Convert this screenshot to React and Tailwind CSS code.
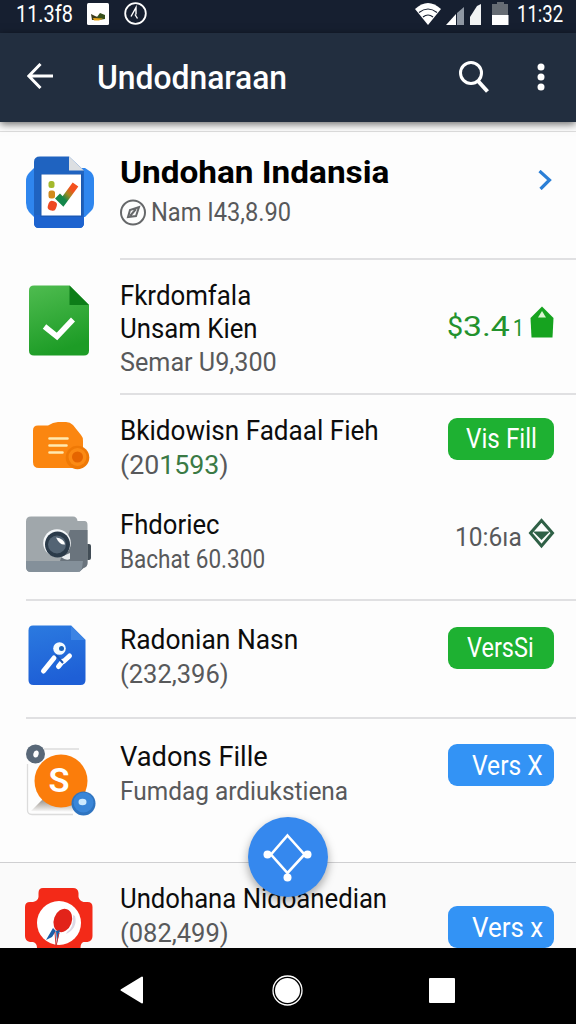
import { useLayoutEffect, useRef, useState } from 'react';
import clsx from 'clsx';

// Condenses or widens one line of text so that it fills the given width.
function FitText({ width, className, children }) {
  const ref = useRef(null);
  const [scale, setScale] = useState(1);

  useLayoutEffect(() => {
    setScale(width / ref.current.offsetWidth);
  }, [width]);

  return (
    <div style={{ width }} className={className}>
      <span ref={ref} className="inline-block whitespace-pre origin-left" style={{ transform: `scaleX(${scale})` }}>
        {children}
      </span>
    </div>
  );
}

function TasksIcon() {
  return (
    <svg width="68" height="73" viewBox="0 0 68 73">
      <defs>
        <linearGradient id="tick" x1="0" y1="1" x2="1" y2="0">
          <stop offset="0.25" stopColor="#13874b" />
          <stop offset="0.5" stopColor="#a08a20" />
          <stop offset="0.75" stopColor="#f4511e" />
        </linearGradient>
      </defs>
      <path d="M8 12h51l6 4q3 3 3 8v23q0 5-3 8l-6 6H8l-5-5q-3-4-3-9V25q0-5 3-8z" fill="#2f86ee" />
      <path d="M14 .5h29l15 14V67q0 5-5 5H13q-5 0-5-5V6q0-5.500 6-5.500z" fill="#1f63c0" />
      <path d="M8 59h50v8q0 5-5 5H13q-5 0-5-5z" fill="#1d63cf" />
      <path d="M43 .5l15 14H43z" fill="#dcdfe2" />
      <rect x="14.500" y="18" width="42" height="43" fill="#1a4f9d" opacity=".5" />
      <rect x="15.500" y="18.500" width="39.500" height="41" fill="#fff" />
      <rect x="22.500" y="25" width="6" height="7" rx="2.500" fill="#a4b92c" />
      <rect x="22.500" y="34.500" width="6.500" height="8" rx="2.500" fill="#d08a1c" />
      <rect x="22" y="45" width="8.500" height="9.500" rx="3.500" fill="#ee4a22" transform="rotate(18 26 50)" />
      <path d="M31.500 40l5.500 5.500L49.500 28.500" fill="none" stroke="url(#tick)" strokeWidth="7" />
    </svg>
  );
}

function SheetIcon() {
  return (
    <svg width="60" height="71" viewBox="0 0 60 71">
      <defs>
        <linearGradient id="sheet" x1="0" y1="0" x2="0.3" y2="1">
          <stop offset="0" stopColor="#4fbc50" />
          <stop offset="1" stopColor="#1d9c26" />
        </linearGradient>
      </defs>
      <path d="M5 .5h35.500L60 20v45.500q0 5-5 5H5q-5 0-5-5V5.500q0-5 5-5z" fill="url(#sheet)" />
      <path d="M40.500.5L60 20H40.500z" fill="#0d7d18" />
      <path d="M15.500 41.500L28 51.500 44 34.500" fill="none" stroke="#fff" strokeWidth="5.500" />
    </svg>
  );
}

function NoteIcon() {
  return (
    <svg width="57" height="50" viewBox="0 0 57 50">
      <path d="M5 4.500h10Q20 1 25 1h8q4 0 7 3l8 10q2 2 2 6v27H6q-6 0-6-6V9.500q0-5 5-5z" fill="#fb8610" />
      <path d="M16.500 17.500h18M16.500 24.500h17M16.500 31.500h13" stroke="#ffe9b0" strokeWidth="2.600" strokeLinecap="round" />
      <circle cx="44.500" cy="36.500" r="11.800" fill="#ef7906" />
      <circle cx="44.500" cy="36" r="9" fill="#fb8a14" />
      <circle cx="44.500" cy="36" r="5.500" fill="#e56500" />
    </svg>
  );
}

function CameraIcon() {
  return (
    <svg width="66" height="57" viewBox="0 0 66 57">
      <path d="M56 28h7q2 0 2 2v12q0 2-2 2h-7z" fill="#424d56" />
      <path d="M5 .5h42q4 0 4.500 4.500h7q3 0 3 4V47q0 4-4 5l-4 4H5q-5 0-5-5V5.500q0-5 5-5z" fill="#a0a7ab" />
      <path d="M44 14h17.500v33q0 4-4 5l-4 3.500V45H34z" fill="#6a747d" />
      <path d="M0 45h57l-1 7q-1 4-5 4H5q-5 0-5-5z" fill="#84909a" />
      <path d="M35 41l9-4v6q-4 2-9-2z" fill="#e9edf0" />
      <circle cx="31" cy="27" r="13.800" fill="#f5f8fa" />
      <ellipse cx="31.500" cy="28.500" rx="12.500" ry="13" fill="#2b3b4a" />
      <circle cx="31" cy="28.500" r="9" fill="#536474" />
      <path d="M30 21.500q8 1 9 7-5 1-9-7z" fill="#fff" />
    </svg>
  );
}

function RunnerIcon() {
  return (
    <svg width="58" height="60" viewBox="0 0 58 60">
      <defs>
        <linearGradient id="runner" x1="0" y1="0" x2="0.2" y2="1">
          <stop offset="0" stopColor="#2b7ae0" />
          <stop offset="1" stopColor="#1e5fd6" />
        </linearGradient>
      </defs>
      <path d="M5 .5h38L57.500 15v40q0 5-5 5H5.500q-5 0-5-5V5.500q0-5 4.500-5z" fill="url(#runner)" />
      <path d="M43 .5L57.500 15H43z" fill="#3c84e4" />
      <path d="M15.500 46L26 33M30.500 41.500l4-5M35.500 36.500l6-5.500" stroke="#fff" strokeWidth="5" strokeLinecap="round" />
      <path d="M28 30l7 8" stroke="#1b56b4" strokeWidth="2" />
      <circle cx="31.500" cy="23.500" r="6.300" fill="#f4fbff" />
      <circle cx="33.500" cy="23.500" r="2.500" fill="#1b62b8" />
    </svg>
  );
}

function CoinIcon() {
  return (
    <svg width="70" height="74" viewBox="0 0 70 74">
      <path d="M18 5h35M1.500 20v46q0 4.500 4.500 4.500h41" fill="none" stroke="#dcdcdc" strokeWidth="1.300" />
      <linearGradient id="coinShade" x1="0" y1="0" x2="0" y2="1">
        <stop offset="0.2" stopColor="#a8a29c" />
        <stop offset="1" stopColor="#fdfdfd" />
      </linearGradient>
      <path d="M5 67l12-12 35 4-6 9z" fill="url(#coinShade)" />
      <circle cx="35" cy="37" r="26.500" fill="#fb7d0b" />
      <text x="22.500" y="48" className="font-['Roboto'] font-semibold" fontSize="33" fill="#fff" textLength="21" lengthAdjust="spacingAndGlyphs">S</text>
      <circle cx="9.500" cy="10" r="9.500" fill="#596878" />
      <ellipse cx="10" cy="10" rx="2.600" ry="3.600" fill="#fff" transform="rotate(15 10 10)" />
      <circle cx="57.500" cy="59.500" r="12" fill="#2f74c0" />
      <circle cx="57.500" cy="58.500" r="10" fill="#3a86d8" />
      <ellipse cx="56.500" cy="58" rx="4" ry="3.300" fill="#cdeaff" />
    </svg>
  );
}

function RocketIcon() {
  return (
    <svg width="68" height="60" viewBox="0 0 68 60">
      <path d="M18 0h30q5 0 5.500 5v4q1 4 5 5h4q5 0 5 5v29q0 5-5 6h-4q-3 1-3 6H12q0-5-4-6H5q-5-1-5-6V19q0-5 5-5h3q5-1 5.500-5V5q0-5 4.500-5z" fill="#f32a18" />
      <circle cx="34" cy="35" r="22" fill="#fff" />
      <path d="M42 44q7-4 6-17l2 1q3 12-9 18z" fill="#dcd9e6" />
      <ellipse cx="38" cy="32.500" rx="9" ry="12" transform="rotate(20 38 32)" fill="#e2231a" />
      <path d="M28 40l-7 12 6-3 4-6zM31 43l1 12 3-13z" fill="#1d5fa8" />
      <path d="M30 44l1 14 3-13" fill="none" stroke="#c33" strokeWidth="1" />
    </svg>
  );
}

function StatusBar() {
  return (
    <div className="h-[33px] bg-[#161f30] flex items-center pl-4 pr-[13px] text-white">
      <FitText width={57} className="-mt-1 text-[23px] leading-7">11.3f8</FitText>
      <svg className="ml-[14px] -mt-[6px]" width="22" height="22" viewBox="0 0 22 22">
        <rect width="22" height="22" rx="1.500" fill="#fff" />
        <path d="M4 11l4 2 5 2v2H5z" fill="#3b3b1c" />
        <path d="M10 14l3-4 5 2v4l-6 1z" fill="#37501d" />
        <path d="M6 15l10 .5-4 2H7z" fill="#e3a51c" />
      </svg>
      <svg className="ml-[15px] -mt-[6px]" width="23" height="23" viewBox="0 0 23 23" fill="none" stroke="#fff">
        <circle cx="11.500" cy="11.500" r="10.300" strokeWidth="1.800" />
        <path d="M7 14.500l5-9v7M11 12.500l2.500 4" strokeWidth="1.400" />
      </svg>
      <svg className="ml-auto -mt-[6px]" width="26" height="22" viewBox="0 0 26 22">
        <path d="M0 6Q13-6 26 6L13 22z" fill="#fff" />
        <path d="M4 9.500q9-7 18 0M8 14q5-4 10 0" fill="none" stroke="#161f30" strokeWidth="1.200" />
      </svg>
      <svg className="ml-[5px] -mt-[6px]" width="36" height="22" viewBox="0 0 36 22">
        <path d="M0 22L10 11v11z" fill="#fff" />
        <path d="M11 10l7-6v18h-7z" fill="#8e97a3" />
        <path d="M24 22V14L31 3l4-2v21z" fill="#f1f3f4" />
      </svg>
      <svg className="ml-[10px] -mt-[6px]" width="17" height="23" viewBox="0 0 17 23">
        <path d="M5 0h7v2h4v11H0V2h5z" fill="#666c74" />
        <path d="M0 13h16.500v10H0z" fill="#fff" />
      </svg>
      <FitText width={46} className="-mt-[3px] ml-2 text-[23px] leading-7">11:32</FitText>
    </div>
  );
}

function AppBar() {
  return (
    <div className="relative z-10 h-[89px] bg-[#222e3f] flex items-center pl-[27px] pr-[31px] text-white shadow-[0_2px_8px_rgba(0,0,0,0.6)]">
      <svg className="-mt-1" width="26" height="26" viewBox="0 0 26 26" fill="none" stroke="#fff" strokeWidth="3">
        <path d="M26 13H2M13.500 1L1.800 13l11.700 12" />
      </svg>
      <FitText width={190} className="ml-[44px] text-[33px] leading-9 font-medium">Undodnaraan</FitText>
      <svg className="ml-auto -mt-[2px]" width="30" height="32" viewBox="0 0 30 32" fill="none" stroke="#fff" strokeWidth="3">
        <circle cx="12" cy="12" r="10.500" />
        <path d="M19 20l9.500 10.500" strokeWidth="4" />
      </svg>
      <svg className="ml-12 -mt-[2px]" width="8" height="28" viewBox="0 0 8 28" fill="#fff">
        <circle cx="4" cy="4" r="3.500" />
        <circle cx="4" cy="14" r="3.500" />
        <circle cx="4" cy="24" r="3.500" />
      </svg>
    </div>
  );
}

function Row({ className, icon, iconClass, textClass, children, action }) {
  return (
    <div className={clsx('flex items-start', className)}>
      <div className={clsx('w-[120px] shrink-0', iconClass)}>{icon}</div>
      <div className={textClass}>{children}</div>
      {action}
    </div>
  );
}

function Title({ width, children }) {
  return <FitText width={width} className="text-[28px] leading-[33px] text-[#0c0c0c]">{children}</FitText>;
}

function Sub({ width, className, children }) {
  return <FitText width={width} className={clsx('text-[25.500px] leading-[33px] text-[#58595b]', className)}>{children}</FitText>;
}

function Button({ className, width, children }) {
  return (
    <button className={clsx('ml-auto mr-[22px] h-[42px] w-[106px] shrink-0 rounded-[9px] flex items-center text-white', className)}>
      <FitText width={width} className="text-[27px] leading-8 text-left">{children}</FitText>
    </button>
  );
}

function Divider({ className }) {
  return <div className={clsx('h-[2px] bg-[#e0e0e2]', className)} />;
}

export default function App() {
  return (
    <div className="relative w-[576px] h-[1024px] overflow-hidden bg-[#fdfdfd] font-['Roboto',sans-serif] flex flex-col">
      <StatusBar />
      <AppBar />

      <div className="h-[826px] overflow-hidden">
        <div className="h-[9px]" />
        <div className="h-px bg-[#dedede]" />

        <Row
          className="h-[126px]"
          icon={<TasksIcon />}
          iconClass="pl-[26px] pt-6"
          textClass="pt-[23px]"
          action={
            <svg className="ml-auto mr-[24px] mt-[38px]" width="14" height="20" viewBox="0 0 14 20" fill="none" stroke="#2b7fd6" strokeWidth="3.200">
              <path d="M1.500 1l10 9-9 9" />
            </svg>
          }
        >
          <FitText width={269} className="text-[31px] leading-9 font-bold text-black">Undohan Indansia</FitText>
          <div className="mt-[5px] flex items-center">
            <svg width="26" height="27" viewBox="0 0 26 27" fill="none" stroke="#66686a" strokeWidth="2">
              <circle cx="13" cy="13.500" r="12" />
              <path d="M8 18l2-7 9-3-3 9zM10 17l6-7" />
            </svg>
            <Sub width={140} className="ml-[5px]">Nam I43,8.90</Sub>
          </div>
        </Row>
        <Divider className="ml-[120px]" />

        <Row
          className="h-[133px]"
          icon={<SheetIcon />}
          iconClass="pl-[29px] pt-[25px]"
          textClass="pt-[19px]"
          action={
            <div className="ml-auto mr-[22px] mt-[46px] flex items-start text-[#23922d]">
              <FitText width={16} className="mt-[5px] text-[27px] leading-8">$</FitText>
              <FitText width={47} className="mt-[5px] text-[28px] leading-8">3.4</FitText>
              <FitText width={11} className="mt-[7px] ml-[3px] text-[23px] leading-8">1</FitText>
              <svg className="ml-[6px]" width="24" height="32" viewBox="0 0 24 32">
                <path d="M12 .5L23.500 12 22.500 31.500h-21L.5 12z" fill="#16a31f" />
                <path d="M12 5l4 6.500H8z" fill="#d9f5cf" />
              </svg>
            </div>
          }
        >
          <Title width={131}>Fkrdomfala</Title>
          <Title width={138}>Unsam Kien</Title>
          <Sub width={157} className="mt-px">Semar U9,300</Sub>
        </Row>
        <Divider className="ml-[120px]" />

        <Row
          className="h-[105px]"
          icon={<NoteIcon />}
          iconClass="pl-[33px] pt-[26px]"
          textClass="pt-[19px]"
          action={<Button width={71} className="mt-[23px] pl-[18px] bg-[#1eb132]">Vis Fill</Button>}
        >
          <Title width={259}>Bkidowisn Fadaal Fieh</Title>
          <Sub width={109} className="mt-[2px]">(20<span className="text-[#3a7a45]">1593</span>)</Sub>
        </Row>
        <Row
          className="h-[99px]"
          icon={<CameraIcon />}
          iconClass="pl-[26px] pt-4"
          textClass="pt-2"
          action={
            <div className="ml-auto mr-[21px] mt-[18px] flex items-start">
              <FitText width={67} className="mt-[3px] text-[26px] leading-8 text-[#58595b]">10:6ıa</FitText>
              <svg className="ml-[6px]" width="27" height="31" viewBox="0 0 27 31">
                <path d="M13.500 2.500L24.500 15l-11 13L2.500 15z" fill="none" stroke="#2f6046" strokeWidth="3" />
                <path d="M5 13.500h17L13.500 22z" fill="#2f6046" />
              </svg>
            </div>
          }
        >
          <Title width={99}>Fhdoriec</Title>
          <Sub width={145} className="mt-[2px]">Bachat 60.300</Sub>
        </Row>
        <Divider className="ml-[26px]" />

        <Row
          className="h-[116px]"
          icon={<RunnerIcon />}
          iconClass="pl-7 pt-6"
          textClass="pt-[22px]"
          action={<Button width={67} className="mt-[26px] pl-[19px] bg-[#1eb132]">VersSi</Button>}
        >
          <Title width={178}>Radonian Nasn</Title>
          <Sub width={109} className="mt-[2px]">(232,396)</Sub>
        </Row>
        <Divider className="ml-[26px]" />

        <Row
          className="h-[143px]"
          icon={<CoinIcon />}
          iconClass="pl-[26px] pt-[25px]"
          textClass="pt-[21px]"
          action={<Button width={71} className="mt-[25px] pl-[24px] pt-[2px] bg-[#3393f5]">Vers X</Button>}
        >
          <Title width={148}>Vadons Fille</Title>
          <Sub width={228} className="mt-[2px]">Fumdag ardiukstiena</Sub>
        </Row>
        <div className="h-px bg-[#cfcfd1]" />

        <Row
          className="h-[85px] bg-[#fafafa]"
          icon={<RocketIcon />}
          iconClass="pl-[25px] pt-[25px]"
          textClass="pt-[19px]"
          action={<Button width={71} className="mt-[43px] pl-[24px] pt-[2px] bg-[#3393f5]">Vers x</Button>}
        >
          <Title width={267}>Undohana Nidoanedian</Title>
          <Sub width={109} className="mt-[2px]">(082,499)</Sub>
        </Row>
      </div>

      <button className="absolute left-[248px] top-[817px] size-[80px] rounded-full bg-[#3588ee] shadow-[0_4px_10px_rgba(0,0,0,0.35)] flex items-center justify-center">
        <svg width="50" height="50" viewBox="0 0 50 50">
          <path d="M24.500 3.500L41.500 22.500 24.500 41 8 22.500z" fill="none" stroke="#fff" strokeWidth="2.600" />
          <circle cx="4.500" cy="22.500" r="4" fill="#fff" />
          <circle cx="44.500" cy="22.500" r="4" fill="#fff" />
          <circle cx="24.500" cy="45.500" r="4" fill="#fff" />
        </svg>
      </button>

      <div className="h-[76px] bg-black flex items-center pl-[120px] pr-[121px] pt-2">
        <svg width="24" height="28" viewBox="0 0 24 28">
          <path d="M22 1.500v25L1.500 14z" fill="#fff" stroke="#fff" strokeWidth="2" strokeLinejoin="round" />
        </svg>
        <svg className="ml-[128px]" width="31" height="31" viewBox="0 0 31 31">
          <circle cx="15.500" cy="15.500" r="14.500" fill="none" stroke="#fff" strokeWidth="1.300" />
          <circle cx="15.500" cy="15.500" r="12.500" fill="#fff" />
        </svg>
        <div className="ml-auto w-[26px] h-[25px] rounded-[1px] bg-white" />
      </div>
    </div>
  );
}
